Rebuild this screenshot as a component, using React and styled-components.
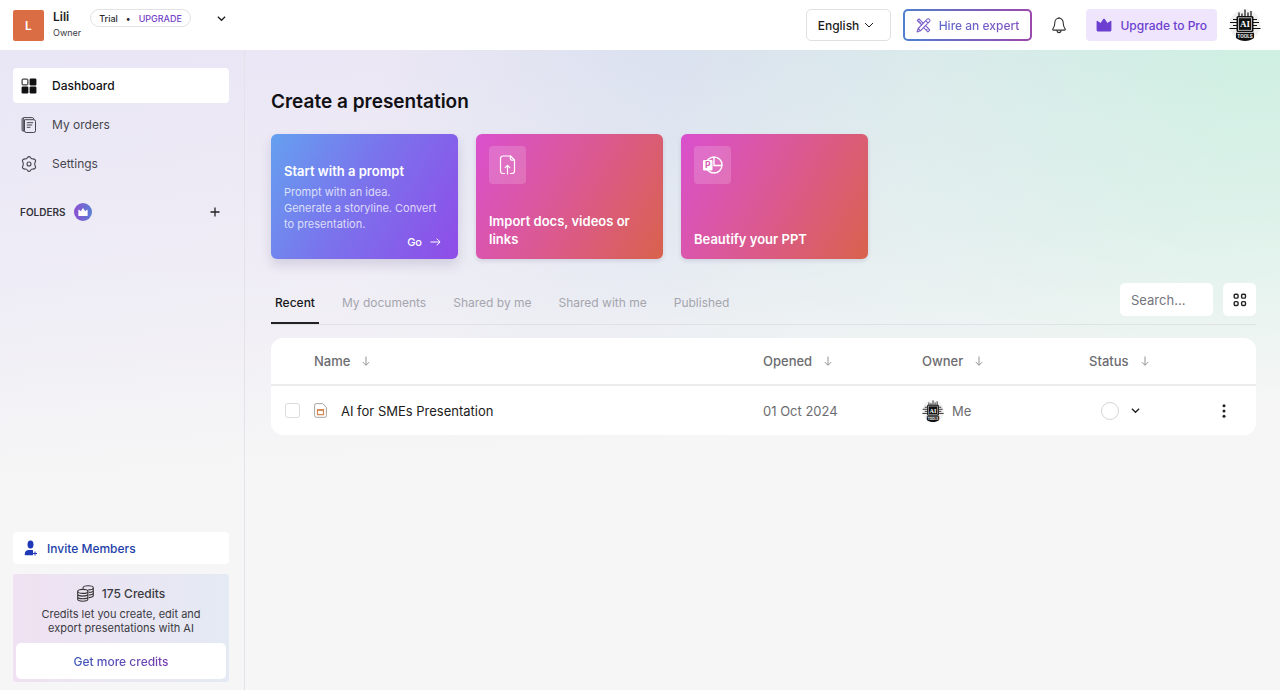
import React, { useState } from 'react';
import styled, { createGlobalStyle } from 'styled-components';

const GlobalStyle = createGlobalStyle`
  * {
    box-sizing: border-box;
  }

  body {
    margin: 0;
    font-family: Inter, "Open Sans", "Liberation Sans", sans-serif;
    font-size: 12px;
    color: #3a3a42;
  }

  button, input, select {
    font-family: inherit;
    font-size: inherit;
    color: inherit;
  }

  button {
    border: 0;
    padding: 0;
    background: none;
    cursor: pointer;
  }

  a {
    color: inherit;
    text-decoration: none;
  }
`;

const Page = styled.div`
  min-height: 100vh;
  display: flex;
  flex-direction: column;
  background:
    linear-gradient(176deg, rgba(246, 246, 246, 0) 60px, rgba(246, 246, 246, 0.42) 290px, #f6f6f6 490px),
    linear-gradient(98deg, #e9e6f6 0%, #ebe6f5 28%, #d9e0ef 49%, #d7e9ea 68%, #c9eee0 90%);
`;

const Header = styled.header`
  display: flex;
  align-items: center;
  justify-content: space-between;
  height: 50px;
  padding: 0 19px 0 13px;
  background: white;
`;

const HeaderGroup = styled.div`
  display: flex;
  align-items: center;
  gap: ${props => props.$gap || 12}px;
`;

const WorkspaceLogo = styled.div`
  display: flex;
  align-items: center;
  justify-content: center;
  width: 31px;
  height: 31px;
  border-radius: 2px;
  background: #da6d44;
  color: white;
  font-weight: 600;
`;

const WorkspaceInfo = styled.div`
  display: flex;
  flex-direction: column;
  line-height: 16px;
`;

const WorkspaceName = styled.strong`
  color: #1d1d22;
  font-size: 12px;
  font-weight: 600;
`;

const WorkspaceRole = styled.span`
  font-size: 9px;
`;

const PlanGroup = styled.div`
  display: flex;
  align-items: center;
  align-self: flex-start;
  gap: 26px;
`;

const PlanBadge = styled.div`
  display: flex;
  align-items: center;
  gap: 8px;
  height: 18px;
  padding: 0 8px;
  border: 1px solid #e2e2e4;
  border-radius: 9px;
  font-size: 9px;
  font-weight: 500;
  color: #2a2a30;

  a {
    color: #7442c8;
  }
`;

const IconButton = styled.button`
  display: flex;
  align-items: center;
  justify-content: center;
  color: ${props => props.$color || '#222'};
`;

const BellButton = styled(IconButton)`
  margin: 0 8px;
`;

const LanguageBox = styled.div`
  position: relative;
  color: #1c1c20;

  select {
    appearance: none;
    height: 32px;
    padding: 0 30px 0 11px;
    border: 1px solid #e0e0e3;
    border-radius: 5px;
    background: white;
    font-weight: 500;
  }

  svg {
    position: absolute;
    top: 11px;
    right: 17px;
    pointer-events: none;
  }
`;

const GradientText = styled.span`
  background: linear-gradient(90deg, ${props => props.$from}, ${props => props.$to});
  background-clip: text;
  color: transparent;
`;

const HireButton = styled.button`
  display: flex;
  align-items: center;
  gap: 8px;
  height: 32px;
  padding: 0 11px;
  border: 2px solid transparent;
  border-radius: 5px;
  background:
    linear-gradient(white, white) padding-box,
    linear-gradient(90deg, #4f80cf, #9c48ac) border-box;
  font-weight: 500;
`;

const UpgradeButton = styled.button`
  display: flex;
  align-items: center;
  gap: 8px;
  height: 32px;
  padding: 0 10px;
  border-radius: 4px;
  background: #efe5fc;
  color: #6c3fd0;
  font-weight: 500;
`;

const Body = styled.div`
  flex: 1;
  display: flex;
`;

const Sidebar = styled.aside`
  display: flex;
  flex-direction: column;
  flex: 0 0 245px;
  padding: 18px 15px 8px 13px;
  border-right: 1px solid #e3e2e9;
`;

const Nav = styled.nav`
  display: flex;
  flex-direction: column;
  gap: 4px;
`;

const NavItem = styled.a`
  display: flex;
  align-items: center;
  gap: 15px;
  height: 35px;
  padding: 0 8px;
  border-radius: 4px;
  background: ${props => (props.$active ? 'white' : 'transparent')};
  color: ${props => (props.$active ? '#111' : '#46464e')};
  font-weight: ${props => (props.$active ? 500 : 400)};
`;

const Folders = styled.div`
  display: flex;
  align-items: center;
  gap: 8px;
  margin-top: 22px;
  padding: 0 9px 0 7px;
  font-size: 10px;
  font-weight: 600;
  color: #34343c;

  button {
    margin-left: auto;
  }
`;

const CrownBadge = styled.span`
  display: flex;
  align-items: center;
  justify-content: center;
  width: 18px;
  height: 18px;
  border-radius: 50%;
  background: linear-gradient(90deg, #8d4fd0, #5a7fd6);
  color: white;
`;

const InviteButton = styled.button`
  display: flex;
  align-items: center;
  gap: 9px;
  height: 32px;
  margin-top: auto;
  padding: 0 11px;
  border-radius: 4px;
  background: white;
  color: #1e3fa8;
  font-weight: 500;
`;

const CreditsCard = styled.section`
  margin-top: 10px;
  padding: 10px 3px 3px;
  border-radius: 3px;
  background: linear-gradient(90deg, #efe1f1, #e4eaf4);
  text-align: center;

  p {
    max-width: 180px;
    margin: 5px auto 8px;
    font-size: 11px;
    line-height: 14px;
  }
`;

const CreditsTitle = styled.div`
  display: flex;
  align-items: center;
  justify-content: center;
  gap: 8px;
  height: 18px;
  font-weight: 500;
`;

const CreditsButton = styled.button`
  width: 100%;
  height: 36px;
  border-radius: 5px;
  background: white;
  font-weight: 500;
`;

const Main = styled.main`
  flex: 1;
  min-width: 0;
  padding: 38px 24px 24px 26px;
`;

const Title = styled.h1`
  margin: 0 0 19px;
  color: #111115;
  font-size: 19px;
  font-weight: 600;
  line-height: 27px;
`;

const Cards = styled.div`
  display: grid;
  grid-template-columns: repeat(auto-fill, 187px);
  gap: 18px;
`;

const Card = styled.button`
  display: flex;
  flex-direction: column;
  justify-content: space-between;
  height: 125px;
  padding: 12px 13px 11px;
  border-radius: 6px;
  background: ${props =>
    props.$primary
      ? 'linear-gradient(120deg, #65a0f0 0%, #7a74ec 45%, #8f4ce8 100%)'
      : 'linear-gradient(120deg, #d950ce 0%, #db5991 50%, #d8624c 100%)'};
  box-shadow: ${props =>
    props.$primary ? '0 6px 12px rgba(60, 50, 110, 0.16)' : '0 2px 4px rgba(60, 50, 110, 0.14)'};
  color: white;
  text-align: left;
`;

const CardTitle = styled.span`
  font-size: 13px;
  font-weight: 600;
  line-height: 18px;
`;

const PromptTitle = styled(CardTitle)`
  margin-top: 16px;
`;

const CardText = styled.span`
  font-size: 11px;
  line-height: 16px;
  color: rgba(255, 255, 255, 0.75);
`;

const CardAction = styled.span`
  display: flex;
  align-items: center;
  align-self: flex-end;
  gap: 8px;
  padding-right: 4px;
  font-size: 11px;
  font-weight: 500;
  line-height: 12px;
`;

const CardIcon = styled.span`
  display: flex;
  align-items: center;
  justify-content: center;
  width: 37px;
  height: 38px;
  border-radius: 4px;
  background: rgba(255, 255, 255, 0.17);
`;

const Toolbar = styled.div`
  display: flex;
  align-items: flex-end;
  justify-content: space-between;
  margin-top: 24px;
  border-bottom: 1px solid #dfe1e5;
`;

const Tabs = styled.div`
  display: flex;
  gap: 19px;
`;

const Tab = styled.button`
  height: 41px;
  padding: 0 4px;
  border-bottom: 2px solid ${props => (props.$active ? '#222' : 'transparent')};
  color: ${props => (props.$active ? '#16161a' : '#a5a5ad')};
  font-weight: ${props => (props.$active ? 500 : 400)};
`;

const Tools = styled.div`
  display: flex;
  gap: 10px;
  padding-bottom: 8px;
`;

const SearchInput = styled.input`
  width: 93px;
  height: 33px;
  padding: 0 11px;
  border: 0;
  border-radius: 5px;
  background: white;
  font-size: 13px;

  &::placeholder {
    color: #74747c;
  }
`;

const ViewButton = styled(IconButton)`
  width: 33px;
  height: 33px;
  border-radius: 5px;
  background: white;
`;

const Table = styled.table`
  width: 100%;
  margin-top: 13px;
  border-spacing: 0;
  border-radius: 12px;
  background: white;
  table-layout: fixed;
  font-size: 13px;
  color: #6c6c70;

  th, td {
    padding: 0;
    text-align: left;
  }

  th {
    height: 48px;
    border-bottom: 2px solid #ececee;
    font-weight: 500;
  }

  td {
    height: 49px;
  }
`;

const Col = styled.col`
  width: ${props => (props.$width ? `${props.$width}px` : 'auto')};
`;

const SortButton = styled.button`
  display: flex;
  align-items: center;
  gap: 12px;
  font-weight: 500;
`;

const Cell = styled.div`
  display: flex;
  align-items: center;
  justify-content: ${props => (props.$center ? 'center' : 'flex-start')};
  gap: ${props => props.$gap || 8}px;
`;

const DocLink = styled.a`
  color: #1c1c20;
`;

const Checkbox = styled.input`
  appearance: none;
  width: 15px;
  height: 15px;
  margin: 0;
  border: 1px solid #dcdcdf;
  border-radius: 3px;
  background: white;

  &:checked {
    background: #6c3fd0;
  }
`;

const StatusButton = styled.button`
  display: flex;
  align-items: center;
  gap: 12px;
  margin-left: 12px;
  color: #222;
`;

const StatusDot = styled.span`
  width: 18px;
  height: 18px;
  border: 1px solid #d5d5d8;
  border-radius: 50%;
`;

function Chevron({ width = 9, stroke = 1.5 }) {
  return (
    <svg width={width} height={width} viewBox="0 0 10 10" fill="none" stroke="currentColor" strokeWidth={stroke}>
      <path d="M1 3l4 4 4-4" />
    </svg>
  );
}

function ArrowDown() {
  return (
    <svg width="8" height="10" viewBox="0 0 8 11" fill="none" stroke="#8a8a8e">
      <path d="M4 .5v9.500M.5 6.700L4 10.200l3.500-3.500" />
    </svg>
  );
}

function Crown({ width = 16 }) {
  return (
    <svg width={width} height={width * 0.875} viewBox="0 0 16 14" fill="currentColor">
      <path d="M.6 3.400a.7.700 0 0 1 1.100-.5L4.500 5 7.300.9a.8.800 0 0 1 1.400 0L11.500 5l2.800-2.100a.7.700 0 0 1 1.100.5v8.600a1.500 1.500 0 0 1-1.500 1.500H2.100a1.500 1.500 0 0 1-1.500-1.500z" />
    </svg>
  );
}

function ChipAvatar({ size }) {
  return (
    <svg width={size} height={size} viewBox="0 0 32 32" role="img" aria-label="AI Tools">
      <circle cx="16" cy="16" r="15.500" fill="#f1f1f1" />
      <g stroke="#111" strokeWidth="1.200" fill="none">
        <path d="M10 8V3.500M13 8V4.500M16 8V.5M19 8V3.500M22 8V2" />
        <path d="M8 10.500H4M8 13.500H1M8 16.500H4M8 19.500H.5" />
        <path d="M24 10.500h4M24 13.500h6M24 16.500h4M24 19.500h7.500" />
      </g>
      <rect x="7.500" y="7" width="17" height="16" rx="1.500" fill="#111" />
      <rect x="9.500" y="8.800" width="13" height="12.500" fill="none" stroke="#ddd" strokeWidth=".8" />
      <text x="16" y="18.300" textAnchor="middle" fontFamily="Liberation Serif, serif" fontSize="9" fontWeight="700" fill="white">AI</text>
      <path d="M7 23.800h18v5.200c-5 4-13 4-18 0z" fill="#111" />
      <text x="16" y="29.200" textAnchor="middle" fontFamily="Inter, sans-serif" fontSize="4.500" fontWeight="700" fill="white">TOOLS</text>
    </svg>
  );
}

function DesignTools() {
  return (
    <svg width="15" height="15" viewBox="0 0 15 15" fill="none" stroke="#7960cc" strokeWidth="1.100" strokeLinejoin="round">
      <path d="M5.700 6.900L1.300 2.500 3 .9l4.400 4.400M9.200 7.200l4.500 4.800-1.800 1.800-4.700-4.700M2.600 4l1-1M4.300 5.500l.9-.9M10.500 12.200l.9-.9" />
      <path d="M11 1.300a1.600 1.600 0 0 1 2.400 0 1.600 1.600 0 0 1 0 2.400l-9 9.100-3.300 1.100L2.200 10.500zM9.700 2.700l2.400 2.400M2.200 10.500l2.300 2.300" />
    </svg>
  );
}

function Bell() {
  return (
    <svg width="14" height="17" viewBox="0 0 14 17" fill="none" stroke="currentColor" strokeWidth="1.100" strokeLinejoin="round">
      <path d="M7 1.200c-2.600 0-4.200 2-4.200 4.500 0 3.600-.8 4.900-1.900 6.200-.4.500-.1 1.200.5 1.200h11.200c.6 0 .9-.7.500-1.200-1.100-1.300-1.900-2.600-1.900-6.200 0-2.500-1.600-4.500-4.200-4.500z" />
      <path d="M5 13.300c0 1.300.8 2.300 2 2.300s2-1 2-2.300M7 0v1" />
    </svg>
  );
}

function DashboardIcon() {
  return (
    <svg width="16" height="16" viewBox="0 0 16 16" fill="currentColor">
      <rect x="1.100" y="1.100" width="5.800" height="5.800" rx=".8" fill="none" stroke="currentColor" />
      <rect x="8.600" y=".6" width="6.800" height="6.800" rx="1.200" />
      <rect x=".6" y="8.600" width="6.800" height="6.800" rx="1.200" />
      <rect x="8.600" y="8.600" width="6.800" height="6.800" rx="1.200" />
    </svg>
  );
}

function OrdersIcon() {
  return (
    <svg width="16" height="16" viewBox="0 0 16 16" fill="none" stroke="currentColor">
      <path d="M3.500 2.700h9.300a1.700 1.700 0 0 1 1.700 1.700v9.400a1.700 1.700 0 0 1-1.700 1.700H5.200a1.700 1.700 0 0 1-1.700-1.700z" />
      <path d="M3.500 14.200H2.300c-.7 0-1.200-.5-1.200-1.200V2.200C1.100 1.200 1.800.6 2.700.6h8.600c.8 0 1.300.5 1.300 1.200v.9M2.300 1v13" />
      <path d="M5.800 5.700h6.400M5.800 8h5.400M5.800 10.300h3.600" />
    </svg>
  );
}

function SettingsIcon() {
  return (
    <svg width="16" height="16" viewBox="0 0 16 16" fill="none" stroke="currentColor" strokeWidth="1.100" strokeLinejoin="round">
      <path d="M6.600 1.500c.6-1.200 2.200-1.200 2.800 0 .5 1 1.500 1.600 2.600 1.400 1.400-.1 2.700.9 2.600 2.100-.1.700-.9 1.500-.9 3s.8 2.300.9 3c.1 1.200-1.200 2.200-2.600 2.100-1.100-.2-2.100.4-2.600 1.400-.6 1.200-2.200 1.200-2.800 0-.5-1-1.500-1.600-2.600-1.400-1.400.1-2.700-.9-2.600-2.100.1-.7.900-1.500.9-3s-.8-2.300-.9-3C1.300 3.800 2.600 2.800 4 2.900c1.100.2 2.100-.4 2.600-1.400z" />
      <circle cx="8" cy="8" r="2" />
    </svg>
  );
}

function PlusIcon() {
  return (
    <svg width="10" height="10" viewBox="0 0 10 10" stroke="currentColor" strokeWidth="1.300">
      <path d="M5 .5v9M.5 5h9" />
    </svg>
  );
}

function InviteIcon() {
  return (
    <svg width="14" height="16" viewBox="0 0 14 16" fill="#1f38b8">
      <ellipse cx="6.500" cy="4.500" rx="3" ry="4" />
      <path d="M1.500 15.300c-.5 0-.8-.3-.8-.8 0-3.100 1.900-4.500 4-4.500h2.800c.6 0 1.100.1 1.500.3v5z" />
      <path d="M11 11.500v4M9 13.500h4" stroke="#1f38b8" />
    </svg>
  );
}

function CoinsIcon() {
  return (
    <svg width="17" height="17" viewBox="0 0 17 17" fill="none" stroke="#333" strokeWidth="1.100">
      <ellipse cx="5.800" cy="6.400" rx="5.100" ry="2" />
      <path d="M.7 6.400v7.700c0 1.200 2.300 2.100 5.100 2.100s5.100-.9 5.100-2.100V6.400M.7 9.100c0 1.100 2.300 2 5.100 2s5.100-.9 5.100-2M.7 11.700c0 1.100 2.300 2 5.100 2s5.100-.9 5.100-2" />
      <path d="M6.100 3.700V2.800C6.100 1.700 8.400.8 11.200.8s5.100.9 5.100 2-2.300 2.100-5.100 2.100M16.300 2.800v7.800c0 1-1.900 1.900-4.300 2M16.300 5.400c0 1-1.900 1.900-4.300 2M16.300 8c0 1-1.900 1.900-4.300 2" />
    </svg>
  );
}

function ImportIcon() {
  return (
    <svg width="17" height="20" viewBox="0 0 17 20" fill="none" stroke="white" strokeWidth="1.200" strokeLinecap="round" strokeLinejoin="round">
      <path d="M5.500 18.500H4A2.500 2.500 0 0 1 1.500 16V3.500A2.500 2.500 0 0 1 4 1h7.500l4 4v11a2.500 2.500 0 0 1-2.500 2.500h-1.500" />
      <path d="M11.300 1v2.500c0 1 .6 1.600 1.600 1.600h2.600M8.500 19v-8.500M6.200 12.700l2.300-2.300 2.300 2.300" />
    </svg>
  );
}

function PptIcon() {
  return (
    <svg width="21" height="18" viewBox="0 0 21 18">
      <circle cx="12" cy="9" r="8" fill="none" stroke="white" strokeWidth="1.400" />
      <path d="M12 1v8.500h8" fill="none" stroke="white" strokeWidth="1.400" />
      <rect x="1" y="4" width="9.500" height="10.500" rx="1" fill="white" />
      <text x="5.800" y="12.300" textAnchor="middle" fontFamily="Inter, sans-serif" fontSize="8.500" fontWeight="700" fill="#d65bb3">P</text>
    </svg>
  );
}

function ArrowRight() {
  return (
    <svg width="11" height="8" viewBox="0 0 11 8" fill="none" stroke="currentColor">
      <path d="M.5 4h9.500M6.700.6L10.100 4 6.700 7.400" />
    </svg>
  );
}

function GridIcon() {
  return (
    <svg width="14" height="14" viewBox="0 0 14 14" fill="none" stroke="currentColor" strokeWidth="1.400">
      <rect x="1.200" y="1.200" width="3.900" height="3.900" rx="1.200" />
      <rect x="8.600" y="1.200" width="3.900" height="3.900" rx="1.200" />
      <rect x="1.200" y="8.600" width="3.900" height="3.900" rx="1.200" />
      <rect x="8.600" y="8.600" width="3.900" height="3.900" rx="1.200" />
    </svg>
  );
}

function DocIcon() {
  return (
    <svg width="13" height="15" viewBox="0 0 13 15" fill="none">
      <path d="M2.200.6h6.500l3.700 3.600v8.500a1.600 1.600 0 0 1-1.600 1.600H2.200A1.600 1.600 0 0 1 .6 12.700V2.200A1.600 1.600 0 0 1 2.200.6z" stroke="#a9a4a2" />
      <path d="M3.500 6.700h6v5h-6z" stroke="#d48a58" strokeWidth="1.200" />
      <path d="M3 7.200h7" stroke="#d48a58" strokeWidth="1.500" />
    </svg>
  );
}

function MoreIcon() {
  return (
    <svg width="4" height="14" viewBox="0 0 4 14" fill="currentColor">
      <circle cx="2" cy="1.700" r="1.500" />
      <circle cx="2" cy="7" r="1.500" />
      <circle cx="2" cy="12.300" r="1.500" />
    </svg>
  );
}

const tabs = ['Recent', 'My documents', 'Shared by me', 'Shared with me', 'Published'];
const columns = ['Name', 'Opened', 'Owner', 'Status'];

function App() {
  const [activeTab, setActiveTab] = useState('Recent');

  return (
    <Page>
      <GlobalStyle />
      <Header>
        <HeaderGroup $gap={9}>
          <WorkspaceLogo>L</WorkspaceLogo>
          <WorkspaceInfo>
            <WorkspaceName>Lili</WorkspaceName>
            <WorkspaceRole>Owner</WorkspaceRole>
          </WorkspaceInfo>
          <PlanGroup>
            <PlanBadge>
              <span>Trial</span>
              <span>•</span>
              <a href="#upgrade">UPGRADE</a>
            </PlanBadge>
            <IconButton aria-label="Switch workspace"><Chevron /></IconButton>
          </PlanGroup>
        </HeaderGroup>

        <HeaderGroup $gap={12}>
          <LanguageBox>
            <select aria-label="Language">
              <option>English</option>
            </select>
            <Chevron width={10} stroke={1} />
          </LanguageBox>
          <HireButton>
            <DesignTools />
            <GradientText $from="#5f68c8" $to="#8050c0">Hire an expert</GradientText>
          </HireButton>
          <BellButton aria-label="Notifications" $color="#333"><Bell /></BellButton>
          <UpgradeButton>
            <Crown />
            Upgrade to Pro
          </UpgradeButton>
          <IconButton aria-label="Account"><ChipAvatar size={32} /></IconButton>
        </HeaderGroup>
      </Header>

      <Body>
        <Sidebar>
          <Nav>
            <NavItem href="#dashboard" $active><DashboardIcon />Dashboard</NavItem>
            <NavItem href="#orders"><OrdersIcon />My orders</NavItem>
            <NavItem href="#settings"><SettingsIcon />Settings</NavItem>
          </Nav>
          <Folders>
            FOLDERS
            <CrownBadge><Crown width={10} /></CrownBadge>
            <IconButton aria-label="Add folder"><PlusIcon /></IconButton>
          </Folders>
          <InviteButton><InviteIcon />Invite Members</InviteButton>
          <CreditsCard>
            <CreditsTitle><CoinsIcon />175 Credits</CreditsTitle>
            <p>Credits let you create, edit and export presentations with AI</p>
            <CreditsButton>
              <GradientText $from="#3b55b8" $to="#7a3fb0">Get more credits</GradientText>
            </CreditsButton>
          </CreditsCard>
        </Sidebar>

        <Main>
          <Title>Create a presentation</Title>
          <Cards>
            <Card $primary>
              <PromptTitle>Start with a prompt</PromptTitle>
              <CardText>
                Prompt with an idea.<br />
                Generate a storyline. Convert to presentation.
              </CardText>
              <CardAction>Go <ArrowRight /></CardAction>
            </Card>
            <Card>
              <CardIcon><ImportIcon /></CardIcon>
              <CardTitle>Import docs, videos or links</CardTitle>
            </Card>
            <Card>
              <CardIcon><PptIcon /></CardIcon>
              <CardTitle>Beautify your PPT</CardTitle>
            </Card>
          </Cards>

          <Toolbar>
            <Tabs role="tablist">
              {tabs.map(tab => (
                <Tab
                  key={tab}
                  role="tab"
                  aria-selected={tab === activeTab}
                  $active={tab === activeTab}
                  onClick={() => setActiveTab(tab)}
                >
                  {tab}
                </Tab>
              ))}
            </Tabs>
            <Tools>
              <SearchInput type="text" placeholder="Search..." aria-label="Search documents" />
              <ViewButton aria-label="Grid view"><GridIcon /></ViewButton>
            </Tools>
          </Toolbar>

          <Table>
            <colgroup>
              <Col $width={43} />
              <Col />
              <Col $width={159} />
              <Col $width={167} />
              <Col $width={103} />
              <Col $width={64} />
            </colgroup>
            <thead>
              <tr>
                <th aria-label="Select" />
                {columns.map(column => (
                  <th key={column}>
                    <SortButton>{column}<ArrowDown /></SortButton>
                  </th>
                ))}
                <th aria-label="Actions" />
              </tr>
            </thead>
            <tbody>
              <tr>
                <td><Cell $center><Checkbox type="checkbox" aria-label="Select AI for SMEs Presentation" /></Cell></td>
                <td>
                  <Cell $gap={14}>
                    <DocIcon />
                    <DocLink href="#document">AI for SMEs Presentation</DocLink>
                  </Cell>
                </td>
                <td>01 Oct 2024</td>
                <td><Cell><ChipAvatar size={22} />Me</Cell></td>
                <td>
                  <StatusButton aria-label="Change status"><StatusDot /><Chevron /></StatusButton>
                </td>
                <td><Cell $center><IconButton aria-label="More actions"><MoreIcon /></IconButton></Cell></td>
              </tr>
            </tbody>
          </Table>
        </Main>
      </Body>
    </Page>
  );
}

export default App;
